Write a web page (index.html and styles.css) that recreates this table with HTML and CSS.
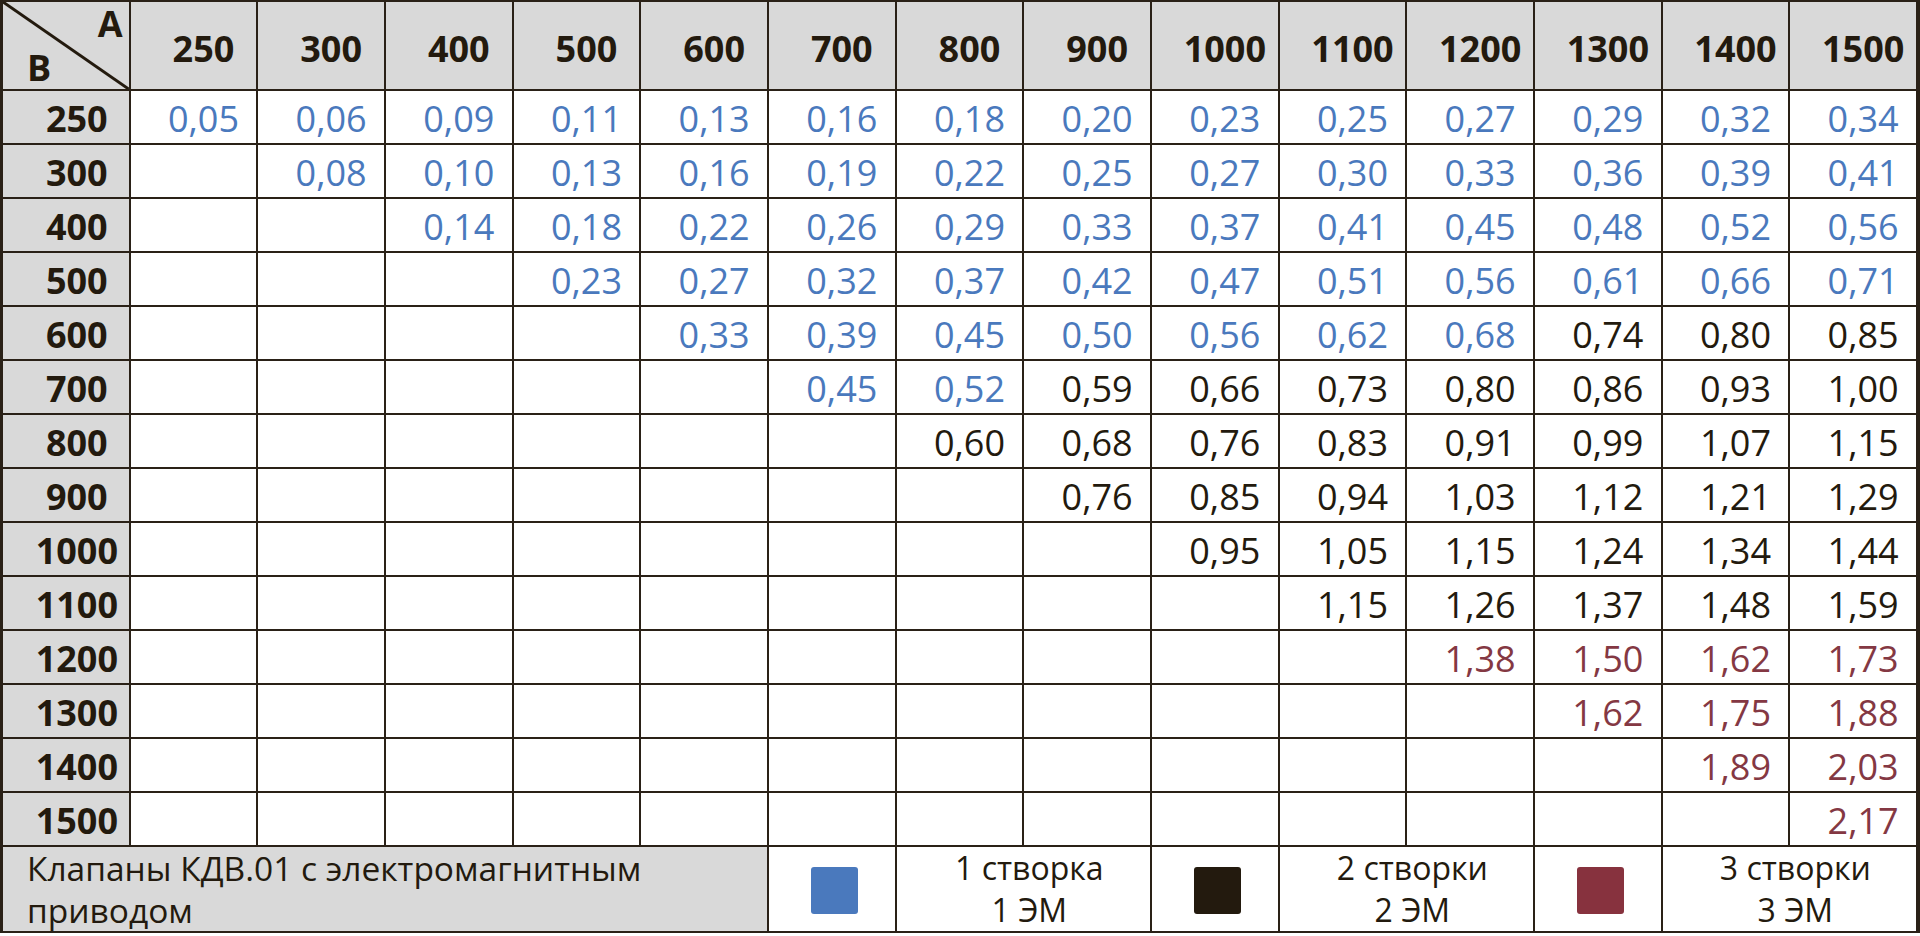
FILE: index.html
```html
<!DOCTYPE html>
<html lang="ru">
<head>
<meta charset="utf-8">
<title>Клапаны КДВ.01</title>
<link rel="stylesheet" href="styles.css">
</head>
<body>
<div class="sheet">
  <div class="corner">
    <svg class="diag" viewBox="0 0 100 100" preserveAspectRatio="none"><line x1="0" y1="0" x2="100" y2="100" vector-effect="non-scaling-stroke"/></svg>
    <span class="lab-a">A</span>
    <span class="lab-b">B</span>
  </div>
  <div class="ch">250</div><div class="ch">300</div><div class="ch">400</div><div class="ch">500</div><div class="ch">600</div><div class="ch">700</div><div class="ch">800</div><div class="ch">900</div><div class="ch">1000</div><div class="ch">1100</div><div class="ch">1200</div><div class="ch">1300</div><div class="ch">1400</div><div class="ch">1500</div>

  <div class="rh">250</div>
  <div class="c b">0,05</div><div class="c b">0,06</div><div class="c b">0,09</div><div class="c b">0,11</div><div class="c b">0,13</div><div class="c b">0,16</div><div class="c b">0,18</div><div class="c b">0,20</div><div class="c b">0,23</div><div class="c b">0,25</div><div class="c b">0,27</div><div class="c b">0,29</div><div class="c b">0,32</div><div class="c b">0,34</div>

  <div class="rh">300</div>
  <div class="c"></div><div class="c b">0,08</div><div class="c b">0,10</div><div class="c b">0,13</div><div class="c b">0,16</div><div class="c b">0,19</div><div class="c b">0,22</div><div class="c b">0,25</div><div class="c b">0,27</div><div class="c b">0,30</div><div class="c b">0,33</div><div class="c b">0,36</div><div class="c b">0,39</div><div class="c b">0,41</div>

  <div class="rh">400</div>
  <div class="c"></div><div class="c"></div><div class="c b">0,14</div><div class="c b">0,18</div><div class="c b">0,22</div><div class="c b">0,26</div><div class="c b">0,29</div><div class="c b">0,33</div><div class="c b">0,37</div><div class="c b">0,41</div><div class="c b">0,45</div><div class="c b">0,48</div><div class="c b">0,52</div><div class="c b">0,56</div>

  <div class="rh">500</div>
  <div class="c"></div><div class="c"></div><div class="c"></div><div class="c b">0,23</div><div class="c b">0,27</div><div class="c b">0,32</div><div class="c b">0,37</div><div class="c b">0,42</div><div class="c b">0,47</div><div class="c b">0,51</div><div class="c b">0,56</div><div class="c b">0,61</div><div class="c b">0,66</div><div class="c b">0,71</div>

  <div class="rh">600</div>
  <div class="c"></div><div class="c"></div><div class="c"></div><div class="c"></div><div class="c b">0,33</div><div class="c b">0,39</div><div class="c b">0,45</div><div class="c b">0,50</div><div class="c b">0,56</div><div class="c b">0,62</div><div class="c b">0,68</div><div class="c k">0,74</div><div class="c k">0,80</div><div class="c k">0,85</div>

  <div class="rh">700</div>
  <div class="c"></div><div class="c"></div><div class="c"></div><div class="c"></div><div class="c"></div><div class="c b">0,45</div><div class="c b">0,52</div><div class="c k">0,59</div><div class="c k">0,66</div><div class="c k">0,73</div><div class="c k">0,80</div><div class="c k">0,86</div><div class="c k">0,93</div><div class="c k">1,00</div>

  <div class="rh">800</div>
  <div class="c"></div><div class="c"></div><div class="c"></div><div class="c"></div><div class="c"></div><div class="c"></div><div class="c k">0,60</div><div class="c k">0,68</div><div class="c k">0,76</div><div class="c k">0,83</div><div class="c k">0,91</div><div class="c k">0,99</div><div class="c k">1,07</div><div class="c k">1,15</div>

  <div class="rh">900</div>
  <div class="c"></div><div class="c"></div><div class="c"></div><div class="c"></div><div class="c"></div><div class="c"></div><div class="c"></div><div class="c k">0,76</div><div class="c k">0,85</div><div class="c k">0,94</div><div class="c k">1,03</div><div class="c k">1,12</div><div class="c k">1,21</div><div class="c k">1,29</div>

  <div class="rh">1000</div>
  <div class="c"></div><div class="c"></div><div class="c"></div><div class="c"></div><div class="c"></div><div class="c"></div><div class="c"></div><div class="c"></div><div class="c k">0,95</div><div class="c k">1,05</div><div class="c k">1,15</div><div class="c k">1,24</div><div class="c k">1,34</div><div class="c k">1,44</div>

  <div class="rh">1100</div>
  <div class="c"></div><div class="c"></div><div class="c"></div><div class="c"></div><div class="c"></div><div class="c"></div><div class="c"></div><div class="c"></div><div class="c"></div><div class="c k">1,15</div><div class="c k">1,26</div><div class="c k">1,37</div><div class="c k">1,48</div><div class="c k">1,59</div>

  <div class="rh">1200</div>
  <div class="c"></div><div class="c"></div><div class="c"></div><div class="c"></div><div class="c"></div><div class="c"></div><div class="c"></div><div class="c"></div><div class="c"></div><div class="c"></div><div class="c r">1,38</div><div class="c r">1,50</div><div class="c r">1,62</div><div class="c r">1,73</div>

  <div class="rh">1300</div>
  <div class="c"></div><div class="c"></div><div class="c"></div><div class="c"></div><div class="c"></div><div class="c"></div><div class="c"></div><div class="c"></div><div class="c"></div><div class="c"></div><div class="c"></div><div class="c r">1,62</div><div class="c r">1,75</div><div class="c r">1,88</div>

  <div class="rh">1400</div>
  <div class="c"></div><div class="c"></div><div class="c"></div><div class="c"></div><div class="c"></div><div class="c"></div><div class="c"></div><div class="c"></div><div class="c"></div><div class="c"></div><div class="c"></div><div class="c"></div><div class="c r">1,89</div><div class="c r">2,03</div>

  <div class="rh">1500</div>
  <div class="c"></div><div class="c"></div><div class="c"></div><div class="c"></div><div class="c"></div><div class="c"></div><div class="c"></div><div class="c"></div><div class="c"></div><div class="c"></div><div class="c"></div><div class="c"></div><div class="c"></div><div class="c r">2,17</div>

  <div class="foot-label">Клапаны КДВ.01 с электромагнитным приводом</div>
  <div class="sw-cell"><span class="sw sw-blue"></span></div>
  <div class="legend">1 створка<br>1 ЭМ</div>
  <div class="sw-cell"><span class="sw sw-black"></span></div>
  <div class="legend">2 створки<br>2 ЭМ</div>
  <div class="sw-cell"><span class="sw sw-red"></span></div>
  <div class="legend">3 створки<br>3 ЭМ</div>
</div>
</body>
</html>
```

FILE: styles.css
```css
html, body {
  margin: 0;
  padding: 0;
  background: #ffffff;
}

body {
  font-family: "Open Sans", "Noto Sans", sans-serif;
  color: #231a0e;
}

.sheet {
  box-sizing: border-box;
  width: 1920px;
  display: grid;
  grid-template-columns: repeat(15, 1fr);
  grid-template-rows: 87px repeat(14, 52px) 84px;
  gap: 2px;
  padding: 2px 4px 2px 3px;
  background: #2a2117;
}

.corner {
  position: relative;
  background: #d9d9d9;
}

.diag {
  position: absolute;
  inset: 0;
  width: 100%;
  height: 100%;
}

.diag line {
  stroke: #231a0e;
  stroke-width: 3px;
}

.lab-a,
.lab-b {
  position: absolute;
  font-weight: 700;
  font-size: 36px;
  line-height: 40px;
}

.lab-a {
  right: 6px;
  top: 2px;
}

.lab-b {
  left: 24px;
  bottom: 1px;
}

.ch {
  background: #d9d9d9;
  display: flex;
  align-items: center;
  justify-content: center;
  padding: 6px 0 0 20px;
  font-weight: 700;
  font-size: 36px;
  line-height: 1;
}

.rh {
  background: #d9d9d9;
  display: flex;
  align-items: center;
  justify-content: center;
  padding: 4px 0 0 22px;
  font-weight: 700;
  font-size: 36px;
  line-height: 1;
}

.c {
  background: #ffffff;
  display: flex;
  align-items: center;
  justify-content: center;
  padding: 4px 0 0 20px;
  font-size: 36px;
  line-height: 1;
}

.b { color: #4a79bd; }
.k { color: #231a0e; }
.r { color: #843843; }

.foot-label {
  grid-column: span 6;
  background: #d9d9d9;
  padding: 0 0 0 24px;
  font-size: 33.5px;
  line-height: 42px;
}

.sw-cell {
  background: #ffffff;
  display: flex;
  align-items: center;
  justify-content: center;
  padding: 3px 0 0 6px;
}

.sw {
  display: block;
  width: 47px;
  height: 47px;
  border-radius: 3px;
}

.sw-blue { background: #4a79bd; }
.sw-black { background: #231a0e; }
.sw-red { background: #87323e; }

.legend {
  grid-column: span 2;
  background: #ffffff;
  text-align: center;
  padding: 0 0 0 12px;
  font-size: 32px;
  line-height: 42px;
}
```
